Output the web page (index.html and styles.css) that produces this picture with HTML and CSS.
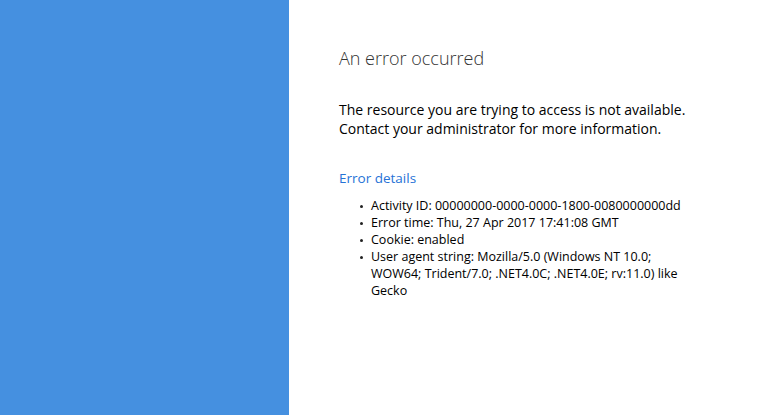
FILE: index.html
```html
<!DOCTYPE html>
<html lang="en">
<head>
    <meta charset="UTF-8">
    <title>An error occurred</title>
    <link rel="stylesheet" href="styles.css">
</head>
<body>
    <div class="page">
        <div class="side-panel"></div>
        <div class="content">
            <h1 class="title">An error occurred</h1>
            <p class="message">The resource you are trying to access is not available.
                Contact your administrator for more information.</p>
            <h2 class="details-title">Error details</h2>
            <ul class="details">
                <li>Activity ID: 00000000-0000-0000-1800-0080000000dd</li>
                <li>Error time: Thu, 27 Apr 2017 17:41:08 GMT</li>
                <li>Cookie: enabled</li>
                <li>User agent string: Mozilla/5.0 (Windows NT 10.0; WOW64; Trident/7.0; .NET4.0C; .NET4.0E; rv:11.0) like Gecko</li>
            </ul>
        </div>
    </div>
</body>
</html>
```

FILE: styles.css
```css
html, body {
    margin: 0;
    height: 100%;
}

body {
    font-family: "Open Sans", "Noto Sans", sans-serif;
    color: #000;
    background-color: #fff;
}

.page {
    display: flex;
    height: 100%;
}

.side-panel {
    width: 289px;
    flex-shrink: 0;
    background-color: #4590e0;
}

.content {
    width: 360px;
    padding: 44px 0 0 50px;
}

.title {
    margin: 0;
    font-size: 18px;
    font-weight: 300;
    line-height: 28px;
    color: #333;
}

.message {
    margin: 28px 0 0;
    font-size: 14px;
    line-height: 19px;
}

.details-title {
    margin: 31px 0 0;
    font-size: 13.5px;
    font-weight: 400;
    line-height: 19px;
    color: #2672d6;
}

.details {
    margin: 9px 0 0;
    padding-left: 32px;
    list-style: none;
    font-size: 12.5px;
    line-height: 17px;
}

.details li {
    position: relative;
}

.details li::before {
    content: "";
    position: absolute;
    left: -11px;
    top: 8px;
    width: 3px;
    height: 3px;
    border-radius: 50%;
    background-color: #222;
}
```
